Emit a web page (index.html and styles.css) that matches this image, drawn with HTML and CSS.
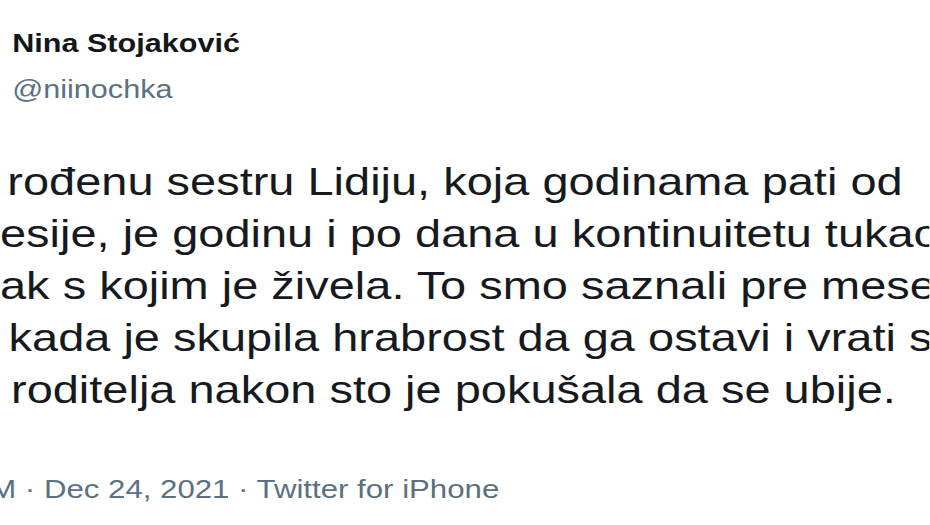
FILE: index.html
```html
<!DOCTYPE html>
<html lang="sr">
<head>
<meta charset="utf-8">
<title>Nina Stojaković tweet</title>
<link rel="stylesheet" href="styles.css">
</head>
<body>
<div class="page">
  <header class="author">
    <div class="name">Nina Stojaković</div>
    <div class="handle">@niinochka</div>
  </header>
  <div class="tweet-text">
    <div class="line l1">rođenu sestru Lidiju, koja godinama pati od</div>
    <div class="line l2">esije, je godinu i po dana u kontinuitetu tukao</div>
    <div class="line l3">ak s kojim je živela. To smo saznali pre meseca</div>
    <div class="line l4">kada je skupila hrabrost da ga ostavi i vrati se</div>
    <div class="line l5">roditelja nakon sto je pokušala da se ubije.</div>
  </div>
  <div class="meta">M · Dec 24, 2021 · Twitter for iPhone</div>
</div>
</body>
</html>
```
FILE: styles.css
```css
html, body {
  margin: 0;
  padding: 0;
  background: #ffffff;
  overflow: hidden;
  width: 930px;
  height: 525px;
}

.page {
  width: 760px;
  height: 525px;
  overflow: hidden;
  transform: scaleX(1.223);
  transform-origin: 0 0;
  font-family: "Liberation Sans", Arial, sans-serif;
  color: #14171a;
}

.author {
  padding-top: 28px;
  padding-left: 10px;
}

.name {
  font-size: 25px;
  line-height: 30px;
  font-weight: 700;
  color: #14171a;
  white-space: nowrap;
}

.handle {
  margin-top: 16px;
  font-size: 25px;
  line-height: 30px;
  color: #5b7083;
  white-space: nowrap;
}

.tweet-text {
  margin-top: 52px;
  font-size: 38.4px;
  line-height: 52px;
  color: #161a1e;
}

.line {
  white-space: nowrap;
  overflow: hidden;
}

.l1 { padding-left: 6px; }
.l2 { padding-left: 0; }
.l3 { padding-left: 0; }
.l4 { padding-left: 7px; }
.l5 { padding-left: 9px; }

.meta {
  margin-top: 58px;
  margin-left: -8px;
  font-size: 25.5px;
  line-height: 30px;
  color: #5b7083;
  white-space: nowrap;
}
```
